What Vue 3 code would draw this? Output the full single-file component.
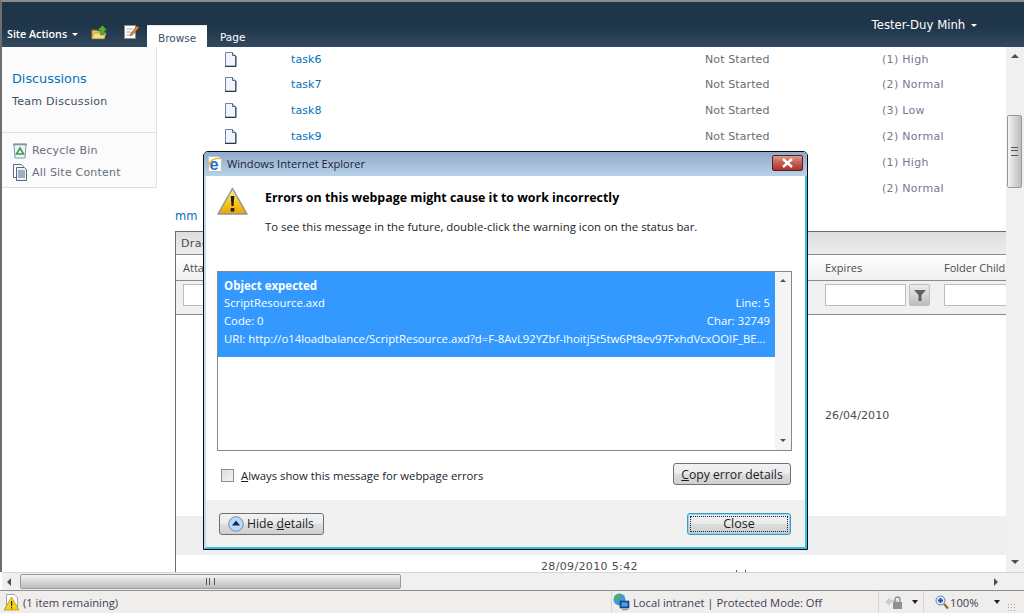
<script setup>
const tasks = [
  { name: 'task6', status: 'Not Started', priority: '(1) High' },
  { name: 'task7', status: 'Not Started', priority: '(2) Normal' },
  { name: 'task8', status: 'Not Started', priority: '(3) Low' },
  { name: 'task9', status: 'Not Started', priority: '(2) Normal' },
  { name: '', status: '', priority: '(1) High' },
  { name: '', status: '', priority: '(2) Normal' }
]
</script>

<template>
  <div class="app">
    <header class="ribbon">
      <div class="site-actions">Site Actions <span class="caret"></span></div>
      <svg class="rib-icon first" width="17" height="16" viewBox="0 0 18 16">
        <path d="M1 5h5l1 1h7v8H1z" fill="#e9c65a" stroke="#b08a2c" stroke-width=".8"/>
        <path d="M1 14l2-6h13l-2 6z" fill="#f3dc86" stroke="#b08a2c" stroke-width=".6"/>
        <path d="M12 0l5 5h-3v5h-4V5H7z" fill="#56b13a" stroke="#2f7d1e" stroke-width=".6"/>
      </svg>
      <svg class="rib-icon second" width="16" height="16" viewBox="0 0 16 16">
        <rect x="1.5" y="1.5" width="11" height="13" fill="#fff" stroke="#8b8b8b"/>
        <path d="M3.5 5h6M3.5 8h4M3.5 11h3" stroke="#9fa8b4"/>
        <path d="M7 12l1-3 6-7 2 1.500-6 7z" fill="#e08a2e" stroke="#8a4b14" stroke-width=".6"/>
      </svg>
      <nav class="tabs">
        <span class="tab active">Browse</span>
        <span class="tab">Page</span>
      </nav>
      <div class="user">Tester-Duy Minh <span class="caret"></span></div>
    </header>

    <div class="main">
      <aside class="nav">
        <div class="nav-top">
          <a class="nav-head">Discussions</a>
          <a class="nav-item">Team Discussion</a>
        </div>
        <div class="nav-bottom">
          <div class="nav-link">
            <svg width="16" height="17" viewBox="0 0 16 17">
              <path d="M2 2h12l-1 14H3z" fill="#eef3f8" stroke="#7e93a8"/>
              <path d="M1 2.500h14" stroke="#7e93a8" stroke-width="1.500"/>
              <path d="M8 6l3.500 6h-7z" fill="none" stroke="#3f9a4a" stroke-width="1.600"/>
            </svg>
            <span>Recycle Bin</span>
          </div>
          <div class="nav-link">
            <svg width="16" height="17" viewBox="0 0 16 17">
              <path d="M1.500.500h8l2 2v11h-10z" fill="#fff" stroke="#51698a"/>
              <path d="M4.500 3.500h8l2 2v11h-10z" fill="#eef2f8" stroke="#51698a"/>
              <path d="M6 7h7M6 9h7M6 11h7M6 13h7" stroke="#51698a"/>
            </svg>
            <span>All Site Content</span>
          </div>
        </div>
      </aside>

      <section class="content">
        <div class="tasks">
          <div v-for="(t, i) in tasks" :key="i" class="task">
            <svg v-if="t.name" width="13" height="15" viewBox="0 0 13 15">
              <path d="M1.500.500h7l3 3v10.500h-10z" fill="#f1f4fa" stroke="#6f83a0"/>
              <path d="M8.500.500v3h3" fill="#dfe6f0" stroke="#4d6585"/>
              <path d="M1 14.500h11V4" fill="none" stroke="#26374f"/>
            </svg>
            <span v-else></span>
            <a class="link">{{ t.name }}</a>
            <span class="status">{{ t.status }}</span>
            <span class="priority">{{ t.priority }}</span>
          </div>
        </div>
        <a class="link mm">mm</a>
        <div class="grid-view">
          <div class="gv-toolbar">Drag a column header here</div>
          <div class="gv-head gv-cols">
            <span>Attachments</span>
            <span>Expires</span>
            <span>Folder Child</span>
          </div>
          <div class="gv-filter gv-cols">
            <span class="fcell"><i class="finput"></i></span>
            <span class="fcell">
              <i class="finput"></i>
              <b class="fbtn">
                <svg width="14" height="14" viewBox="0 0 14 14"><path d="M1 2h12L8.500 7v6h-3V7z" fill="#5f5f5f"/></svg>
              </b>
            </span>
            <span class="fcell"><i class="finput wide"></i></span>
          </div>
          <div class="gv-row gv-cols">
            <span></span>
            <span class="cell">26/04/2010</span>
            <span></span>
          </div>
          <div class="gv-band"></div>
          <div class="gv-last">
            <span class="cell stamp">28/09/2010 5:42</span>
            <span class="ticks"></span>
          </div>
        </div>
      </section>

      <div class="vscroll">
        <span class="arr up"></span>
        <div class="vthumb"><i></i></div>
        <span class="arr down"></span>
      </div>
    </div>

    <div class="hscroll">
      <span class="harr left"></span>
      <div class="hthumb"><i></i></div>
      <span class="harr right"></span>
    </div>

    <footer class="statusbar">
      <div class="sb-left">
        <svg width="16" height="17" viewBox="0 0 16 17">
          <path d="M2.500.500h8l3 3v12h-11z" fill="#fff" stroke="#9aa5b5"/>
          <path d="M7.500 3L15 16H0z" fill="#f7d21c" stroke="#a98a10" stroke-width=".7"/>
          <path d="M7 7h1.200v5H7zM7 13h1.200v1.500H7z" fill="#222"/>
        </svg>
        <span>(1 item remaining)</span>
      </div>
      <div class="sb-zone">
        <svg width="18" height="18" viewBox="0 0 18 18">
          <circle cx="6.500" cy="6.500" r="6" fill="#3f9bd6"/>
          <path d="M2 4l3-3 3 1-1 3-3 1-1 3zM8 8l3-1 1 2-3 2z" fill="#55b245"/>
          <rect x="7" y="8" width="9" height="7" fill="#1d4f9e" stroke="#123a78" stroke-width=".6"/>
          <rect x="8.500" y="9.500" width="6" height="4" fill="#4fa0e8"/>
          <path d="M9 16.500h6" stroke="#8f99a5" stroke-width="1.500"/>
        </svg>
        <span>Local intranet | Protected Mode: Off</span>
      </div>
      <div class="sb-prot">
        <svg width="20" height="18" viewBox="0 0 20 18">
          <path d="M1 9l5-5v3c5-1 9 0 11 4-3-2-7-2-11-1v3z" fill="#c9cdd1"/>
          <rect x="9" y="9" width="9" height="7" fill="#8d9196"/>
          <path d="M11 9V6.500a2.500 2.500 0 015 0V9" fill="none" stroke="#8d9196" stroke-width="1.400"/>
        </svg>
        <span class="drop"></span>
      </div>
      <div class="sb-zoom">
        <svg width="14" height="15" viewBox="0 0 14 15">
          <circle cx="5.500" cy="5.500" r="4.500" fill="#dcebfa" stroke="#5f7f9f"/>
          <path d="M3 5.500h5M5.500 3v5" stroke="#1b4fb0" stroke-width="1.800"/>
          <path d="M9 9l4 4.500" stroke="#8a6a3a" stroke-width="2.200"/>
        </svg>
        <span class="pct">100%</span>
        <span class="drop"></span>
      </div>
      <div class="grip"></div>
    </footer>

    <div class="dialog" role="dialog">
      <div class="titlebar">
        <svg class="ie" width="16" height="16" viewBox="0 0 16 16">
          <path d="M1.500.500h10l3 3v12h-13z" fill="#fff" stroke="#b9c2cc"/>
          <text x="2.500" y="13.500" class="ie-e">e</text>
          <path d="M.5 12C2 5 8 1 13 3" fill="none" stroke="#eeb422" stroke-width="1.300"/>
        </svg>
        <span class="title">Windows Internet Explorer</span>
        <span class="close-x">
          <svg width="13" height="10" viewBox="0 0 13 10"><path d="M2 1l9 8M11 1l-9 8" stroke="#fff" stroke-width="2.400"/></svg>
        </span>
      </div>
      <div class="dlg-body">
        <div class="dlg-main">
          <div class="msg">
            <svg class="warn" width="31" height="29" viewBox="0 0 31 29">
              <defs>
                <linearGradient id="wg" x1="0" y1="0" x2="0" y2="1">
                  <stop offset="0" stop-color="#fff3a0"/>
                  <stop offset=".5" stop-color="#f8cd1b"/>
                  <stop offset="1" stop-color="#eba40a"/>
                </linearGradient>
              </defs>
              <path d="M15.500 1.500L30 27H1z" fill="url(#wg)" stroke="#8f9498" stroke-width="1.500" stroke-linejoin="round"/>
              <path d="M13.700 9h3.600l-.8 10h-2zM13.700 21h3.600v3.500h-3.600z" fill="#1d1d1d"/>
            </svg>
            <div class="msg-text">
              <h1>Errors on this webpage might cause it to work incorrectly</h1>
              <p>To see this message in the future, double-click the warning icon on the status bar.</p>
            </div>
          </div>
          <div class="listbox">
            <div class="list-area">
              <div class="selected">
                <div class="line first"><b>Object expected</b></div>
                <div class="line"><span>ScriptResource.axd</span><span>Line: 5</span></div>
                <div class="line"><span>Code: 0</span><span>Char: 32749</span></div>
                <div class="line uri">URI: http://o14loadbalance/ScriptResource.axd?d=F-8AvL92YZbf-Ihoitj5t5tw6Pt8ev97FxhdVcxOOIF_BE...</div>
              </div>
            </div>
            <div class="list-scroll">
              <span class="arr up small"></span>
              <span class="arr down small"></span>
            </div>
          </div>
          <div class="opts">
            <label class="check"><i class="box"></i><span><u>A</u>lways show this message for webpage errors</span></label>
            <button class="btn copy"><u>C</u>opy error details</button>
          </div>
        </div>
        <div class="dlg-foot">
          <button class="btn hide">
            <svg width="16" height="16" viewBox="0 0 16 16">
              <circle cx="8" cy="8" r="7.300" fill="#bcd8f2" stroke="#6a93bd"/>
              <path d="M8 4.500L12 9.500H4z" fill="#0c2a66"/>
            </svg>
            <span class="hide-label">Hide <u>d</u>etails</span>
          </button>
          <button class="btn close"><span>Close</span></button>
        </div>
      </div>
    </div>
  </div>
</template>

<style scoped>
.app {
  position: relative;
  width: 1024px;
  height: 613px;
  display: flex;
  flex-direction: column;
  overflow: hidden;
  background: #fff;
  font-family: "DejaVu Sans", sans-serif;
  font-size: 11px;
}
.ribbon {
  flex: none;
  height: 45px;
  border-top: 2px solid #8b8b8b;
  border-left: 2px solid #6e6e6e;
  background: linear-gradient(#1f3549, #1f3549 55%, #32495f);
  display: flex;
  align-items: flex-end;
  color: #fff;
}
.site-actions {
  margin: 0 0 6px 5px;
  font-family: "Open Sans", sans-serif;
  font-size: 10.700px;
  font-weight: 600;
  width: 76px;
  white-space: nowrap;
}
.caret {
  display: inline-block;
  border: 3px solid transparent;
  border-top: 3.500px solid #fff;
  border-bottom: 0;
  vertical-align: 2px;
  margin-left: 2px;
}
.rib-icon.first { margin: 0 0 6px 8px; }
.rib-icon.second { margin: 0 0 7px 15px; }
.tabs { display: flex; margin-left: 8px; align-self: flex-end; }
.tab {
  height: 22px;
  box-sizing: border-box;
  padding: 5px 11px 0 13px;
  font-size: 10.500px;
  line-height: 14px;
}
.tab.active {
  background: #fff;
  color: #3b4f65;
  border-top: 1px solid #e4e8ec;
  padding: 5px 11px 0 11px;
  width: 60px;
}
.user {
  margin: 0 0 15px auto;
  padding-right: 47px;
  font-size: 11.700px;
}
.main {
  flex: none;
  height: 525px;
  display: flex;
  border-left: 2px solid #6e6e6e;
}
.nav { flex: none; width: 155px; }
.nav-top {
  height: 86px;
  box-sizing: border-box;
  background: #fbfbfb;
  border-right: 1px solid #dfdfdf;
  border-bottom: 1px solid #dfdfdf;
  padding: 23px 0 0 10px;
}
.nav-head { display: block; color: #0072bc; font-size: 12.800px; line-height: 18px; }
.nav-item { display: block; color: #3b4f65; font-size: 11px; margin-top: 7px; line-height: 14px; letter-spacing: .3px; }
.nav-bottom {
  height: 55px;
  box-sizing: border-box;
  background: #fbfbfb;
  border-right: 1px solid #dfdfdf;
  border-bottom: 1px solid #dfdfdf;
  padding: 6px 0 0 10px;
}
.nav-link { display: flex; align-items: center; gap: 4px; height: 22px; color: #666f7d; letter-spacing: .2px; }
.content { flex: 1; min-width: 0; overflow: hidden; display: flex; flex-direction: column; }
.tasks { flex: none; padding-left: 67px; height: 155px; }
.task {
  display: grid;
  grid-template-columns: 67px 414px 177px auto;
  align-items: center;
  height: 26px;
  letter-spacing: .1px;
}
.task:first-child { height: 24px; }
.link { color: #0072bc; }
.status { color: #6d6d6d; }
.priority { color: #7f7392; letter-spacing: .3px; }
.mm { flex: none; margin: 8px 0 0 18px; line-height: 13px; height: 21px; font-size: 11.500px; }
.grid-view {
  margin-left: 18px;
  border-left: 1px solid #6c6c6c;
  flex: 1;
  min-height: 0;
  display: flex;
  flex-direction: column;
  color: #4c4c4c;
}
.gv-toolbar {
  flex: none;
  height: 23px;
  box-sizing: border-box;
  border-top: 1px solid #6c6c6c;
  background: linear-gradient(#dedede, #ececec);
  padding: 5px 0 0 5px;
  white-space: nowrap;
  letter-spacing: .4px;
}
.gv-cols {
  flex: none;
  display: grid;
  grid-template-columns: 642px 119px 100px;
  padding-left: 7px;
}
.gv-head {
  height: 27px;
  box-sizing: border-box;
  border-top: 1px solid #8a8a8a;
  border-bottom: 1px solid #8a8a8a;
  background: linear-gradient(#fff, #efefef);
  align-items: center;
  white-space: nowrap;
  overflow: hidden;
  font-family: "Open Sans", sans-serif;
  font-size: 11px;
}
.gv-filter {
  height: 34px;
  box-sizing: border-box;
  background: #f0f0f0;
  border-bottom: 1px solid #8a8a8a;
  align-items: start;
  padding-top: 3px;
}
.fcell { display: flex; gap: 3px; }
.finput {
  display: block;
  width: 79px;
  height: 20px;
  background: #fff;
  border: 1px solid #bdbdbd;
}
.finput.wide { width: 90px; }
.fbtn {
  width: 21px;
  height: 22px;
  box-sizing: border-box;
  border: 1px solid #bdbdbd;
  border-radius: 2px;
  background: linear-gradient(#ececec, #bcbcbc);
  display: flex;
  align-items: center;
  justify-content: center;
}
.gv-row { height: 201px; align-items: center; letter-spacing: .1px; }
.cell { color: #4c4c4c; white-space: nowrap; }
.stamp { letter-spacing: .35px; }
.gv-band { flex: none; height: 39px; background: #efefef; }
.gv-last {
  flex: 1;
  min-height: 0;
  overflow: hidden;
  display: flex;
  padding: 5px 0 0 365px;
  line-height: 14px;
}
.ticks {
  width: 8px;
  height: 2px;
  margin: 10px 0 0 98px;
  border-left: 1px solid #5a5a5a;
  border-right: 1px solid #5a5a5a;
}
.vscroll {
  flex: none;
  width: 18px;
  background: #f0f0f0;
  display: flex;
  flex-direction: column;
  align-items: center;
}
.arr { display: block; width: 0; height: 0; border: 4px solid transparent; }
.arr.up { border-bottom: 4px solid #4e4e4e; border-top: 0; margin-top: 7px; }
.arr.down { border-top: 4px solid #4e4e4e; border-bottom: 0; margin-top: auto; margin-bottom: 8px; }
.vthumb {
  width: 15px;
  height: 73px;
  box-sizing: border-box;
  margin: 57px 1px 0 0;
  border: 1px solid #9a9a9a;
  border-radius: 2px;
  background: linear-gradient(90deg, #f4f4f4, #d7d7d7 50%, #bdbdbd);
  display: flex;
  align-items: center;
  justify-content: center;
}
.vthumb i {
  width: 7px;
  height: 7px;
  border-top: 1px solid #555;
  border-bottom: 1px solid #555;
  background: linear-gradient(#0000 2px, #555 2px, #555 3px, #0000 3px);
}
.hscroll {
  flex: none;
  height: 18px;
  box-sizing: border-box;
  margin-left: 2px;
  background: #f0f0f0;
  display: flex;
  align-items: center;
  border-top: 1px solid #d6d6d6;
}
.harr { width: 0; height: 0; border: 4px solid transparent; }
.harr.left { border-right: 4px solid #4e4e4e; border-left: 0; margin-left: 5px; }
.harr.right { border-left: 4px solid #4e4e4e; border-right: 0; margin-left: 593px; }
.hthumb {
  width: 381px;
  height: 15px;
  box-sizing: border-box;
  margin-left: 9px;
  border: 1px solid #9a9a9a;
  border-radius: 2px;
  background: linear-gradient(#f4f4f4, #d7d7d7 50%, #bdbdbd);
  display: flex;
  align-items: center;
  justify-content: center;
}
.hthumb i {
  width: 7px;
  height: 7px;
  border-left: 1px solid #555;
  border-right: 1px solid #555;
  background: linear-gradient(90deg, #0000 2px, #555 2px, #555 3px, #0000 3px);
}
.statusbar {
  flex: none;
  height: 23px;
  box-sizing: border-box;
  border-top: 1px solid #8f8f8f;
  background: #f0eded;
  display: flex;
  align-items: center;
  font-family: "Open Sans", sans-serif;
  font-size: 11.200px;
  color: #3d3d52;
}
.sb-left {
  width: 611px;
  padding-left: 4px;
  box-sizing: border-box;
  display: flex;
  align-items: center;
  gap: 3px;
}
.sb-zone {
  width: 267px;
  height: 100%;
  box-sizing: border-box;
  border-left: 1px solid #d8d4d4;
  display: flex;
  align-items: center;
  gap: 2px;
  padding-left: 1px;
}
.sb-prot {
  width: 45px;
  height: 100%;
  box-sizing: border-box;
  border-left: 1px solid #d8d4d4;
  display: flex;
  align-items: center;
  gap: 8px;
  padding-left: 5px;
}
.sb-zoom {
  width: 92px;
  height: 100%;
  box-sizing: border-box;
  border-left: 1px solid #d8d4d4;
  display: flex;
  align-items: center;
  padding-left: 11px;
  gap: 1px;
}
.pct { width: 43px; }
.drop { width: 0; height: 0; border: 3.500px solid transparent; border-top: 4px solid #222; border-bottom: 0; }
.grip {
  width: 8px;
  height: 8px;
  align-self: flex-end;
  margin: 0 0 2px -8px;
  background-image: radial-gradient(circle, #a8a8a8 1px, transparent 1px);
  background-size: 3px 3px;
}
.dialog {
  position: absolute;
  left: 203px;
  top: 151px;
  width: 605px;
  height: 399px;
  box-sizing: border-box;
  border: 1px solid #0a0a0a;
  border-radius: 5px 5px 0 0;
  display: flex;
  flex-direction: column;
  font-family: "Open Sans", sans-serif;
  font-size: 11.300px;
  color: #1c1c2a;
  overflow: hidden;
}
.titlebar {
  flex: none;
  height: 24px;
  background: linear-gradient(#8fabc9, #b9d1ea);
  display: flex;
  align-items: center;
  padding-left: 3px;
}
.ie { overflow: visible; }
.ie-e { font: bold 16px "Liberation Sans", sans-serif; fill: #1a6fc4; }
.title { margin: 0 0 2px 4px; font-size: 11.100px; color: #20203a; }
.close-x {
  margin-left: auto;
  margin-right: 4px;
  margin-bottom: 3px;
  width: 31px;
  height: 16px;
  box-sizing: border-box;
  border: 1px solid #5a1d1a;
  border-radius: 2px;
  background: linear-gradient(#dd9a8e, #c25f50 50%, #a93325);
  display: flex;
  align-items: center;
  justify-content: center;
}
.dlg-body {
  flex: 1;
  min-height: 0;
  display: flex;
  flex-direction: column;
  border-left: 2px solid #b7dcf3;
  border-right: 2px solid #36bfe6;
  border-bottom: 2px solid #36bfe6;
}
.dlg-main { height: 324px; background: #fff; padding: 11px 13px 0 12px; box-sizing: border-box; }
.msg { display: flex; height: 84px; }
.warn { flex: none; margin: 0 0 0 -1px; }
.msg-text { margin-left: 17px; }
.msg-text h1 { margin: 2px 0 0; font-size: 12.400px; font-weight: 700; line-height: 17px; color: #000; white-space: nowrap; }
.msg-text p { margin: 13px 0 0; font-size: 11.400px; line-height: 16px; white-space: nowrap; }
.listbox {
  width: 575px;
  height: 180px;
  box-sizing: border-box;
  margin-left: -1px;
  border: 1px solid #828790;
  display: flex;
}
.list-area { flex: 1; min-width: 0; }
.selected {
  background: #3399ff;
  color: #fff;
  height: 85px;
  padding: 4px 5px 0 6px;
  box-sizing: border-box;
}
.line { display: flex; justify-content: space-between; height: 18px; line-height: 18px; white-space: nowrap; }
.line.first { font-size: 11.500px; line-height: 20px; }
.list-scroll {
  flex: none;
  width: 16px;
  background: #f4f4f4;
  display: flex;
  flex-direction: column;
  align-items: center;
}
.arr.small { border-width: 3.500px; }
.opts { display: flex; justify-content: space-between; align-items: center; height: 22px; margin: 12px 1px 0 0; }
.check { display: flex; align-items: center; gap: 7px; margin: 3px 0 0 3px; }
.box {
  display: block;
  width: 11px;
  height: 11px;
  border: 1px solid #8e8f8f;
  background: linear-gradient(135deg, #dcdcdc, #f4f4f4);
  outline: 1px solid #fff;
}
.btn {
  height: 22px;
  box-sizing: border-box;
  border: 1px solid #707070;
  border-radius: 3px;
  background: linear-gradient(#f2f2f2, #ebebeb 48%, #dddddd 52%, #cfcfcf);
  font: inherit;
  font-size: 12.200px;
  color: #1c1c2a;
  padding: 0;
}
.copy { width: 118px; }
.dlg-foot {
  flex: 1;
  background: #f0f0f0;
  display: flex;
  justify-content: space-between;
  padding: 13px 14px 0 13px;
}
.hide {
  width: 105px;
  display: flex;
  align-items: center;
  gap: 3px;
  padding-left: 8px;
}
.hide-label { position: relative; top: -1px; }
.close {
  width: 104px;
  border: 1px solid #3c9ac9;
  box-shadow: inset 0 0 0 1px #8fd6f5;
  display: flex;
  align-items: center;
  justify-content: center;
  padding: 2px;
  font-size: 12.500px;
}
.close span {
  display: block;
  width: 100%;
  height: 100%;
  line-height: 16px;
  outline: 1px dotted #222;
  outline-offset: -1px;
}
</style>
